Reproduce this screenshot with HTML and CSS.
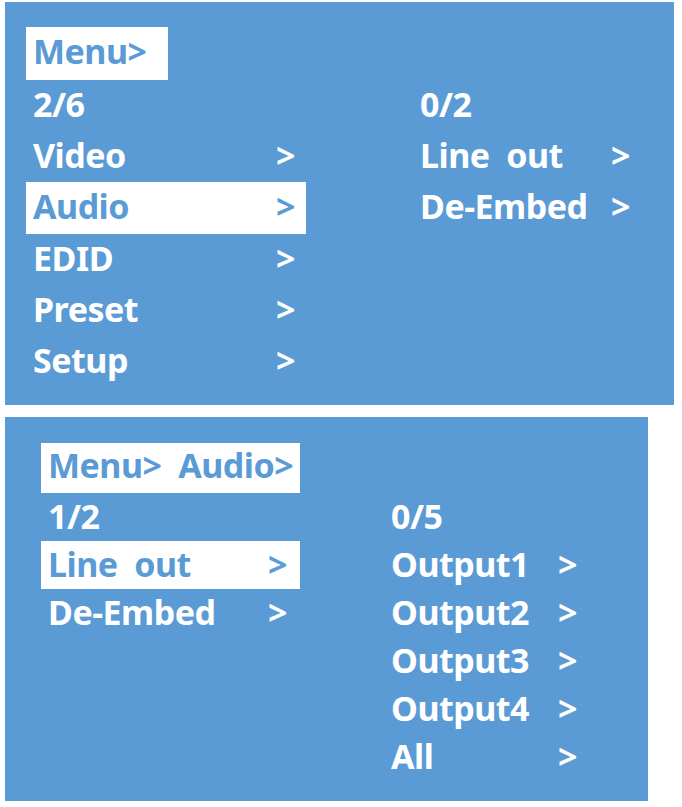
FILE: index.html
```html
<!DOCTYPE html>
<html lang="en">
<head>
<meta charset="utf-8">
<title>OSD Menu</title>
<link rel="stylesheet" href="styles.css">
</head>
<body>
<div class="screen">
  <section class="panel panel-main">
    <div class="crumb">Menu&gt;</div>
    <div class="cols">
      <ul class="list list-left">
        <li class="row"><span class="label">2/6</span></li>
        <li class="row"><span class="label">Video</span><span class="arrow">&gt;</span></li>
        <li class="row is-selected"><span class="label">Audio</span><span class="arrow">&gt;</span></li>
        <li class="row"><span class="label">EDID</span><span class="arrow">&gt;</span></li>
        <li class="row"><span class="label">Preset</span><span class="arrow">&gt;</span></li>
        <li class="row"><span class="label">Setup</span><span class="arrow">&gt;</span></li>
      </ul>
      <ul class="list list-right">
        <li class="row"><span class="label">0/2</span></li>
        <li class="row"><span class="label">Line  out</span><span class="arrow">&gt;</span></li>
        <li class="row"><span class="label">De-Embed</span><span class="arrow">&gt;</span></li>
      </ul>
    </div>
  </section>
  <section class="panel panel-sub">
    <div class="crumb">Menu&gt;  Audio&gt;</div>
    <div class="cols">
      <ul class="list list-left">
        <li class="row"><span class="label">1/2</span></li>
        <li class="row is-selected"><span class="label">Line  out</span><span class="arrow">&gt;</span></li>
        <li class="row"><span class="label">De-Embed</span><span class="arrow">&gt;</span></li>
      </ul>
      <ul class="list list-right">
        <li class="row"><span class="label">0/5</span></li>
        <li class="row"><span class="label">Output1</span><span class="arrow">&gt;</span></li>
        <li class="row"><span class="label">Output2</span><span class="arrow">&gt;</span></li>
        <li class="row"><span class="label">Output3</span><span class="arrow">&gt;</span></li>
        <li class="row"><span class="label">Output4</span><span class="arrow">&gt;</span></li>
        <li class="row"><span class="label">All</span><span class="arrow">&gt;</span></li>
      </ul>
    </div>
  </section>
</div>
</body>
</html>
```
FILE: styles.css
```css
* {
  box-sizing: border-box;
  margin: 0;
  padding: 0;
}

html, body {
  background: #ffffff;
}

body {
  font-family: "Noto Sans", "Open Sans", "DejaVu Sans", sans-serif;
  font-weight: 700;
  font-size: 34px;
  letter-spacing: -0.5px;
  color: #ffffff;
}

.screen {
  display: flex;
  flex-direction: column;
  gap: 12px;
  padding: 2px 0 0 5px;
}

.panel {
  background: #5b9bd5;
}

.panel-main {
  width: 669px;
  height: 403px;
  padding: 25px 0 0 21px;
}

.panel-sub {
  width: 643px;
  height: 384px;
  padding: 26px 0 0 36px;
}

.crumb {
  background: #ffffff;
  color: #5b9bd5;
  white-space: pre;
  padding-left: 7px;
}

.panel-main .crumb {
  width: 142px;
  height: 53px;
  line-height: 48.4px;
}

.panel-sub .crumb {
  width: 259px;
  height: 50px;
  line-height: 45.6px;
}

.cols {
  display: flex;
}

.list {
  list-style: none;
}

.row {
  display: grid;
  white-space: pre;
}

.row.is-selected {
  background: #ffffff;
  color: #5b9bd5;
}

.panel-main .row {
  height: 51.2px;
  line-height: 49.6px;
}

.panel-sub .row {
  height: 48px;
  line-height: 46.6px;
}

.panel-main .list-left {
  width: 280px;
}

.panel-main .list-left .row {
  grid-template-columns: 243px auto;
  padding-left: 7px;
}

.panel-main .list-right {
  margin-left: 114px;
}

.panel-main .list-right .row {
  grid-template-columns: 191px auto;
}

.panel-sub .list-left {
  width: 259px;
}

.panel-sub .list-left .row {
  grid-template-columns: 220px auto;
  padding-left: 7px;
}

.panel-sub .list-right {
  margin-left: 91px;
}

.panel-sub .list-right .row {
  grid-template-columns: 167px auto;
}
```
